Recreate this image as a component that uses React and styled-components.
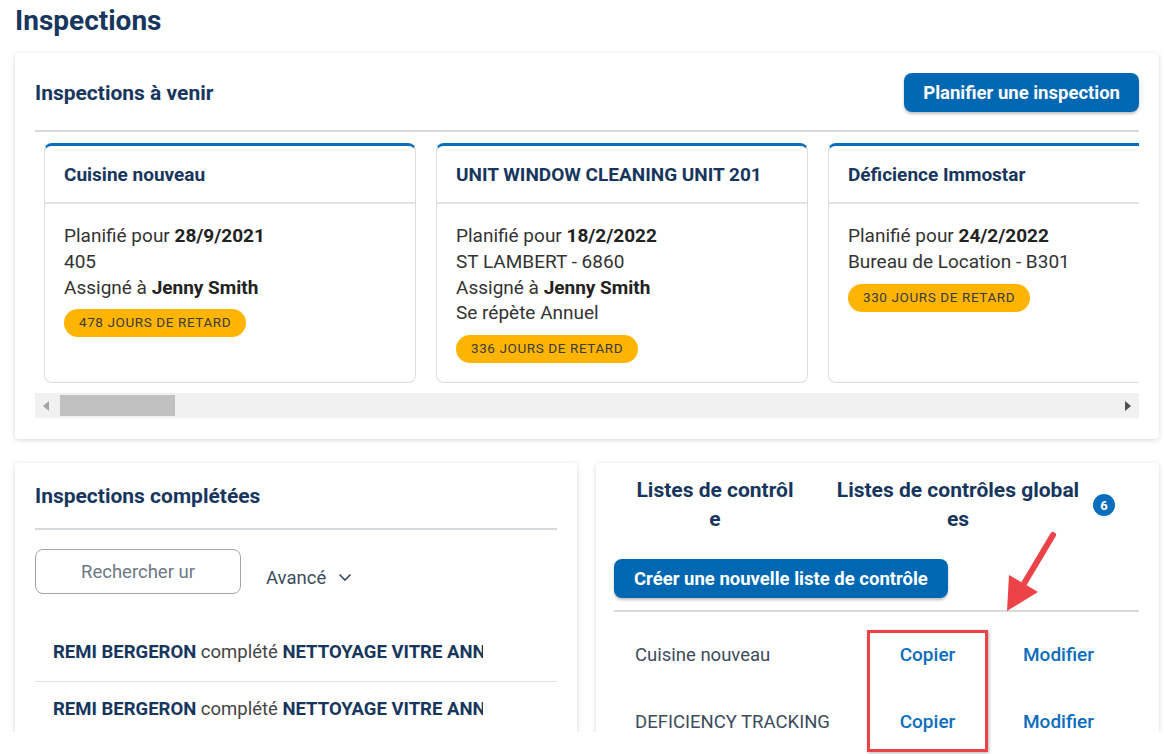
import React from "react";
import styled, { createGlobalStyle } from "styled-components";

const GlobalStyle = createGlobalStyle`
  html, body { margin: 0; padding: 0; background: #ffffff; }
  body { font-family: Roboto, "Liberation Sans", Arial, sans-serif; overflow: hidden; }
  * { box-sizing: border-box; }
`;

const Page = styled.div`
  position: relative;
  width: 1164px;
  height: 754px;
`;

const Viewport = styled.div`
  height: 732px;
  overflow: hidden;
  padding: 0 5px 0 15px;
`;

const PageTitle = styled.h1`
  margin: 0;
  height: 53px;
  padding-top: 4px;
  font-size: 28px;
  line-height: 33px;
  font-weight: 700;
  color: #17365d;
`;

const Panel = styled.section`
  background: #fff;
  border-radius: 4px;
  box-shadow: 0 1px 5px rgba(0, 0, 0, 0.16);
  padding: ${(p) => p.$pad || "20px 20px 21px"};
`;

const PanelHeader = styled.div`
  display: flex;
  align-items: center;
  justify-content: space-between;
  height: ${(p) => p.$h || "39px"};
`;

const PanelTitle = styled.h2`
  margin: 0;
  font-size: 21px;
  font-weight: 700;
  color: #17365d;
`;

const PrimaryButton = styled.button`
  border: none;
  border-radius: 8px;
  background: #0068b3;
  color: #fff;
  font-family: Roboto, sans-serif;
  font-weight: 700;
  font-size: 18.5px;
  height: 39px;
  padding: 0 ${(p) => p.$px || "20px"};
  box-shadow: 0 2px 3px rgba(0, 0, 0, 0.25);
`;

const Divider = styled.div`
  height: 2px;
  background: #d5dade;
  margin: ${(p) => p.$m || "0"};
`;

const CardsTrack = styled.div`
  display: flex;
  gap: 20px;
  padding: 11px 0 0 9px;
  overflow: hidden;
`;

const InspectionCard = styled.div`
  flex: 0 0 372px;
  height: 240px;
  border: 1px solid #dcdcdc;
  border-top: 3px solid #0a6ebd;
  border-radius: 8px;
  background: #fff;
`;

const CardHead = styled.div`
  height: 58px;
  border-bottom: 2px solid #e3e3e3;
  display: flex;
  align-items: center;
  padding-left: 19px;
  font-size: 19px;
  font-weight: 700;
  color: #17365d;
`;

const CardBody = styled.div`
  padding: 19px 19px 0;
  font-size: 19px;
  line-height: 25.8px;
  color: #333;
`;

const Line = styled.div`
  white-space: nowrap;
  b { font-weight: 700; color: #222; }
`;

const LateBadge = styled.span`
  display: inline-flex;
  align-items: center;
  height: 28px;
  margin-top: 9px;
  padding: 0 15px;
  border-radius: 14px;
  background: #ffb500;
  color: #3a3a3a;
  font-size: 13.5px;
  letter-spacing: 0.6px;
`;

const ScrollBar = styled.div`
  margin-top: 10px;
  height: 25px;
  background: #f1f1f1;
  display: flex;
  align-items: center;
  padding: 0 8px;
`;

const ScrollArrow = styled.span`
  width: 0;
  height: 0;
  border-top: 5px solid transparent;
  border-bottom: 5px solid transparent;
  ${(p) =>
    p.$dir === "left"
      ? "border-right: 6px solid #a3a3a3;"
      : "border-left: 6px solid #505050;"}
`;

const ScrollThumb = styled.div`
  width: 115px;
  height: 21px;
  background: #c1c1c1;
  margin-left: 11px;
  flex: 0 0 auto;
`;

const Spacer = styled.div`
  flex: 1;
`;

const BottomGrid = styled.div`
  display: grid;
  grid-template-columns: 562px 563px;
  gap: 19px;
  margin-top: 24px;
`;

const TallPanel = styled(Panel)`
  height: 320px;
`;

const SearchRow = styled.div`
  display: flex;
  align-items: center;
  margin-top: 19px;
`;

const SearchBox = styled.div`
  width: 206px;
  height: 45px;
  border: 1px solid #a5a5a5;
  border-radius: 8px;
  display: flex;
  align-items: center;
  justify-content: center;
  color: #6d7885;
  font-size: 18.5px;
`;

const AdvancedToggle = styled.div`
  display: flex;
  align-items: center;
  gap: 12px;
  margin: 12px 0 0 25px;
  color: #3c4b5c;
  font-size: 18.5px;
`;

const CompletedList = styled.div`
  margin-top: 28px;
`;

const CompletedRow = styled.div`
  height: ${(p) => (p.$last ? "54px" : "60px")};
  border-bottom: ${(p) => (p.$last ? "none" : "1px solid #e2e2e2")};
  display: flex;
  align-items: center;
  padding-left: 18px;
`;

const RowText = styled.div`
  width: 430px;
  overflow: hidden;
  white-space: nowrap;
  font-size: 18.5px;
  color: #444;
  b { font-weight: 700; color: #17365d; }
`;

const Tabs = styled.div`
  position: relative;
  display: flex;
  align-items: flex-start;
  height: 83px;
`;

const Tab = styled.div`
  width: ${(p) => p.$w};
  text-align: center;
  font-size: 21px;
  font-weight: 700;
  line-height: 29px;
  color: #17365d;
`;

const CountBadge = styled.span`
  position: absolute;
  left: 479px;
  top: 18px;
  width: 22px;
  height: 22px;
  border-radius: 50%;
  background: #0a6ebd;
  color: #fff;
  font-size: 13px;
  font-weight: 700;
  display: flex;
  align-items: center;
  justify-content: center;
`;

const ChecklistTable = styled.div`
  display: grid;
  grid-template-columns: 253px 121px 1fr;
  grid-auto-rows: 67px;
  padding-top: 9px;
`;

const Cell = styled.div`
  display: flex;
  align-items: center;
  justify-content: ${(p) => (p.$center ? "center" : "flex-start")};
  padding-left: ${(p) => p.$pl || "0"};
  font-size: ${(p) => (p.$link ? "19px" : "18.5px")};
  color: ${(p) => (p.$link ? "#0a6ebd" : "#3c4b5c")};
  font-weight: ${(p) => (p.$link ? 500 : 400)};
  white-space: nowrap;
`;

const HighlightBox = styled.div`
  position: absolute;
  left: 867px;
  top: 630px;
  width: 121px;
  height: 122px;
  border: 3px solid #ec4349;
  box-shadow: 1px 1px 3px rgba(0, 0, 0, 0.3);
  pointer-events: none;
`;

const ArrowSvg = styled.svg`
  position: absolute;
  left: 995px;
  top: 525px;
  overflow: visible;
  pointer-events: none;
`;

const cards = [
  {
    title: "Cuisine nouveau",
    date: "28/9/2021",
    place: "405",
    assigned: "Jenny Smith",
    late: "478 JOURS DE RETARD",
  },
  {
    title: "UNIT WINDOW CLEANING UNIT 201",
    date: "18/2/2022",
    place: "ST LAMBERT - 6860",
    assigned: "Jenny Smith",
    repeat: "Se répète Annuel",
    late: "336 JOURS DE RETARD",
  },
  {
    title: "Déficience Immostar",
    date: "24/2/2022",
    place: "Bureau de Location - B301",
    late: "330 JOURS DE RETARD",
  },
];

const Chevron = () => (
  <svg width="14" height="9" viewBox="0 0 14 9" fill="none">
    <path d="M1.5 1.5 L7 7 L12.5 1.5" stroke="#3c4b5c" strokeWidth="1.6" />
  </svg>
);

export default function App() {
  return (
    <Page>
      <GlobalStyle />
      <Viewport>
        <PageTitle>Inspections</PageTitle>
        <Panel>
          <PanelHeader>
            <PanelTitle>Inspections à venir</PanelTitle>
            <PrimaryButton $px="19px">Planifier une inspection</PrimaryButton>
          </PanelHeader>
          <Divider $m="18px 0 0" />
          <CardsTrack>
            {cards.map((c) => (
              <InspectionCard key={c.title}>
                <CardHead>{c.title}</CardHead>
                <CardBody>
                  <Line>
                    Planifié pour <b>{c.date}</b>
                  </Line>
                  <Line>{c.place}</Line>
                  {c.assigned && (
                    <Line>
                      Assigné à <b>{c.assigned}</b>
                    </Line>
                  )}
                  {c.repeat && <Line>{c.repeat}</Line>}
                  <LateBadge>{c.late}</LateBadge>
                </CardBody>
              </InspectionCard>
            ))}
          </CardsTrack>
          <ScrollBar>
            <ScrollArrow $dir="left" />
            <ScrollThumb />
            <Spacer />
            <ScrollArrow $dir="right" />
          </ScrollBar>
        </Panel>

        <BottomGrid>
          <TallPanel $pad="20px 20px 0">
            <PanelHeader $h="26px">
              <PanelTitle>Inspections complétées</PanelTitle>
            </PanelHeader>
            <Divider $m="19px 0 0" />
            <SearchRow>
              <SearchBox>Rechercher ur</SearchBox>
              <AdvancedToggle>
                Avancé <Chevron />
              </AdvancedToggle>
            </SearchRow>
            <CompletedList>
              <CompletedRow>
                <RowText>
                  <b>REMI BERGERON</b> complété <b>NETTOYAGE VITRE ANNUEL</b>
                </RowText>
              </CompletedRow>
              <CompletedRow $last>
                <RowText>
                  <b>REMI BERGERON</b> complété <b>NETTOYAGE VITRE ANNUEL</b>
                </RowText>
              </CompletedRow>
            </CompletedList>
          </TallPanel>

          <TallPanel $pad="13px 20px 0 18px">
            <Tabs>
              <Tab $w="202px">
                Listes de contrôl
                <br />e
              </Tab>
              <Tab $w="284px">
                Listes de contrôles global
                <br />
                es
              </Tab>
              <CountBadge>6</CountBadge>
            </Tabs>
            <PrimaryButton $px="20px">Créer une nouvelle liste de contrôle</PrimaryButton>
            <Divider $m="12px 0 0" />
            <ChecklistTable>
              <Cell $pl="21px">Cuisine nouveau</Cell>
              <Cell $center $link>Copier</Cell>
              <Cell $link $pl="35px">Modifier</Cell>
              <Cell $pl="21px">DEFICIENCY TRACKING</Cell>
              <Cell $center $link>Copier</Cell>
              <Cell $link $pl="35px">Modifier</Cell>
            </ChecklistTable>
          </TallPanel>
        </BottomGrid>
      </Viewport>

      <HighlightBox />
      <ArrowSvg width="70" height="95" viewBox="0 0 70 95">
        <line x1="58" y1="10" x2="27" y2="62" stroke="#ec4349" strokeWidth="6" strokeLinecap="round" />
        <polygon points="12,86 14,50 43,67" fill="#ec4349" />
      </ArrowSvg>
    </Page>
  );
}
